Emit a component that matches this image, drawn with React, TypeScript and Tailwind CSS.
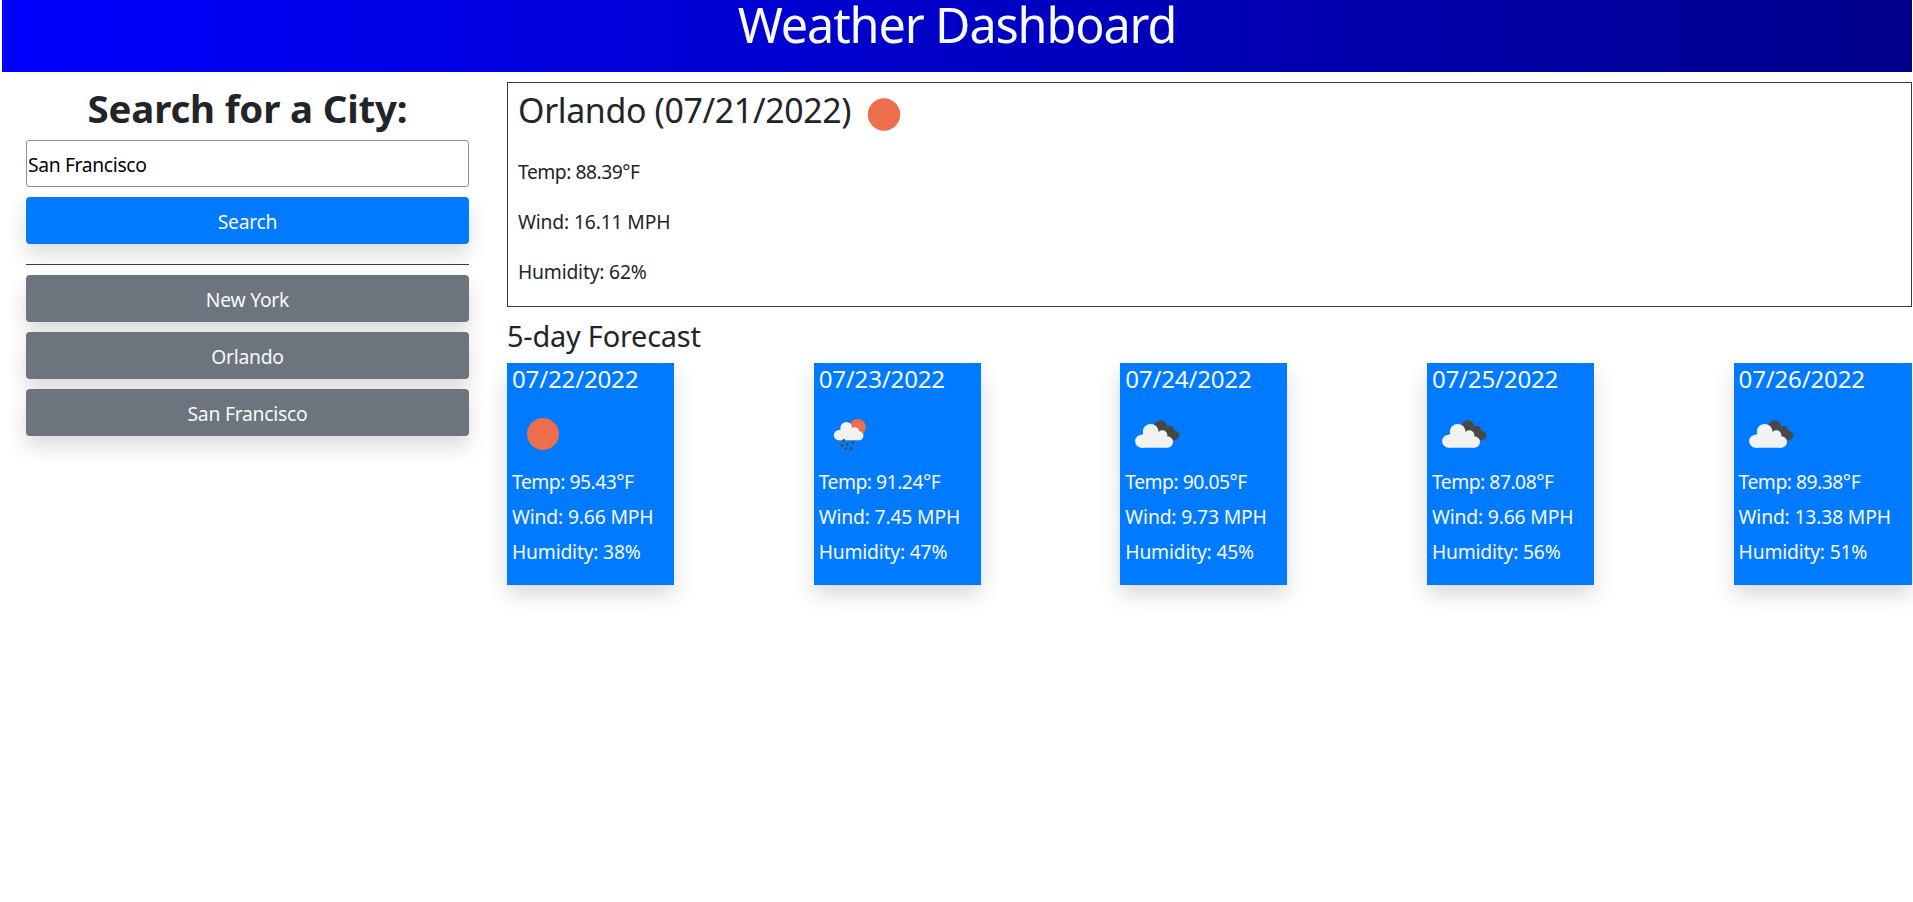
type IconKind = "sun" | "rain" | "clouds";

interface Forecast {
  date: string;
  icon: IconKind;
  temp: string;
  wind: string;
  humidity: string;
}

const cities = ["New York", "Orlando", "San Francisco"];

const forecast: Forecast[] = [
  { date: "07/22/2022", icon: "sun", temp: "95.43", wind: "9.66", humidity: "38" },
  { date: "07/23/2022", icon: "rain", temp: "91.24", wind: "7.45", humidity: "47" },
  { date: "07/24/2022", icon: "clouds", temp: "90.05", wind: "9.73", humidity: "45" },
  { date: "07/25/2022", icon: "clouds", temp: "87.08", wind: "9.66", humidity: "56" },
  { date: "07/26/2022", icon: "clouds", temp: "89.38", wind: "13.38", humidity: "51" },
];

function WeatherIcon({ kind }: { kind: IconKind }) {
  return (
    <svg viewBox="0 0 210 180" className="block h-[60px] w-[70px]">
      {kind === "sun" && <circle cx="108" cy="102" r="48" fill="#ec6e4c" />}
      {kind === "rain" && (
        <g transform="translate(18 0)">
          <circle cx="113" cy="82" r="25" fill="#ec6e4c" />
          <g fill="#f2f2f2">
            <circle cx="79" cy="84" r="18" />
            <circle cx="57" cy="105.500" r="15.500" />
            <circle cx="105" cy="94" r="12.500" />
            <circle cx="117" cy="107.500" r="13.500" />
            <path d="M57 90L79 84L105 86L117 94V121H57Z" />
          </g>
          <g stroke="#484848" strokeWidth="7" strokeLinecap="round">
            <path d="M71.500 120l-1 2M83 132l-2 3M99.500 127l-1 2M67 134.500l-2 3M78 145l-1 1M94 144.500l-2 3" />
          </g>
        </g>
      )}
      {kind === "clouds" && (
        <>
          <g fill="#484848">
            <circle cx="122" cy="80" r="19.500" />
            <circle cx="149" cy="91" r="13.500" />
            <circle cx="164" cy="106" r="14" />
            <path d="M110 92L130 76L152 86L166 118L140 122Z" />
          </g>
          <g fill="#f2f2f2">
            <circle cx="92" cy="95.500" r="23.500" />
            <circle cx="65" cy="123.500" r="19.500" />
            <circle cx="127" cy="106" r="15" />
            <circle cx="142" cy="126" r="17" />
            <path d="M65 104L92 90L127 104L142 126V143H65Z" />
          </g>
        </>
      )}
    </svg>
  );
}

function CityButton({ label, primary = false }: { label: string; primary?: boolean }) {
  return (
    <button
      type="button"
      className={`block h-[47px] w-full rounded-[4px] pt-[2px] leading-[30px] tracking-[-0.012em] text-[#f8f9fa] shadow-[0_10px_20px_rgba(0,0,0,0.15)] ${
        primary ? "bg-[#007bff]" : "bg-[#6c757d]"
      }`}
    >
      {label}
    </button>
  );
}

function ForecastCard({ day, last }: { day: Forecast; last: boolean }) {
  return (
    <article
      className={`h-[222px] bg-[#007bff] pl-[5px] text-[#f8f9fa] shadow-[0_10px_20px_rgba(0,0,0,0.15)] ${
        last ? "w-[178.4px]" : "w-[167px]"
      }`}
    >
      <h3 className="mb-[6px] text-[24.1px] leading-[31px] tracking-[-0.008em]">{day.date}</h3>
      <div className="-ml-[5px] mb-1">
        <WeatherIcon kind={day.icon} />
      </div>
      <p className="leading-[35px] tracking-[-0.025em]">Temp: {day.temp}°F</p>
      <p className="leading-[35px] tracking-[-0.008em]">Wind: {day.wind} MPH</p>
      <p className="leading-[35px] tracking-[-0.01em]">Humidity: {day.humidity}%</p>
    </article>
  );
}

export default function App() {
  return (
    <div className="h-[902px] overflow-hidden bg-white pl-[2px] pr-px font-['Noto_Sans','Open_Sans',sans-serif] text-[19.3px] text-[#212529]">
      <header className="h-[72px] bg-linear-to-r/srgb from-[#0000ff] to-[#00008b] text-center">
        <h1 className="text-[48.5px] leading-[48px] tracking-[-0.023em] text-[#f8f9fa]">Weather Dashboard</h1>
      </header>
      <main className="flex">
        <aside className="ml-6 mr-[38px] w-[443px] shrink-0 pt-3">
          <h2 className="mb-2 text-center text-[38.4px] font-bold leading-[48px] tracking-[-0.004em]">
            Search for a City:
          </h2>
          <input
            type="text"
            defaultValue="San Francisco"
            className="mb-[10px] block h-[47px] w-full rounded-[3px] border border-[#8f8f9d] bg-white pl-px pt-[2px] tracking-[-0.018em] text-black outline-none"
          />
          <CityButton label="Search" primary />
          <div className="mb-[10px] mt-5 h-px bg-[#343a40]" />
          <div className="flex flex-col gap-[10px]">
            {cities.map((city) => (
              <CityButton key={city} label={city} />
            ))}
          </div>
        </aside>
        <div className="min-w-0 flex-1 pt-[10px]">
          <section className="h-[225px] border border-[#343a40] pl-[10px]">
            <div className="flex h-16">
              <h2 className="w-[335px] whitespace-nowrap pt-[5px] text-[33.9px] leading-[44px] tracking-[-0.01em]">
                Orlando (07/21/2022)
              </h2>
              <svg viewBox="0 0 50 50" className="ml-[5.5px] mt-[6px] h-[50px] w-[50px]">
                <circle cx="25" cy="25.500" r="16.200" fill="#ec6e4c" />
              </svg>
            </div>
            <p className="leading-[50px] tracking-[-0.025em]">Temp: 88.39°F</p>
            <p className="leading-[50px] tracking-[-0.008em]">Wind: 16.11 MPH</p>
            <p className="leading-[50px] tracking-[-0.01em]">Humidity: 62%</p>
          </section>
          <h2 className="mb-[7px] mt-[9px] text-[28.9px] leading-[40px] tracking-[-0.007em]">5-day Forecast</h2>
          <div className="flex justify-between">
            {forecast.map((day, i) => (
              <ForecastCard key={day.date} day={day} last={i === forecast.length - 1} />
            ))}
          </div>
        </div>
      </main>
    </div>
  );
}
